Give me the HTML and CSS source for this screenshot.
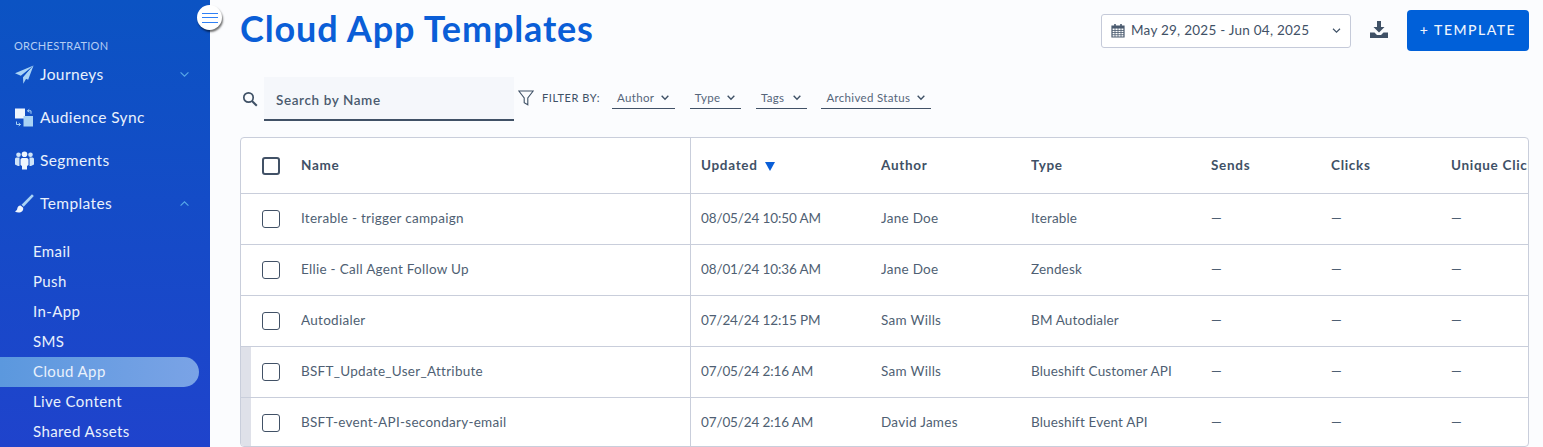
FILE: index.html
```html
<!DOCTYPE html>
<html lang="en">
<head>
<meta charset="utf-8">
<title>Cloud App Templates</title>
<link rel="stylesheet" href="styles.css">
</head>
<body>
<div class="app">
  <aside class="sidebar">
    <button class="menu-toggle" aria-label="Toggle menu"><span></span><span></span><span></span></button>
    <div class="nav-label">ORCHESTRATION</div>
    <a class="nav-item">
      <svg class="nav-icon" viewBox="0 0 19 19"><path d="M18.500.5 0 8.200l5.800 2.600L18.500.5 8 12.500l.3 6.200z" fill="#a9d3f5"/><path d="M18.500.5 8 12.500l5.200 2.300z" fill="#a9d3f5"/></svg>
      <span class="nav-text">Journeys</span>
      <svg class="nav-chevron" viewBox="0 0 12 8"><path d="M1.500 1.500 6 6l4.500-4.500" /></svg>
    </a>
    <a class="nav-item">
      <svg class="nav-icon" viewBox="0 0 19 19"><rect x="0" y="0.500" width="10" height="10" fill="#eef5fd"/><rect x="8.500" y="8" width="9.500" height="10.500" fill="#a9d3f5"/><path d="M12.500 2.800h3.500v3M12.500 2.800l1.800-1.500M12.500 2.800l1.800 1.500M5.500 16.500H1.500v-3M5.500 16.500l-1.800-1.500M5.500 16.500l-1.800 1.500" fill="none" stroke="#a9d3f5" stroke-width="1"/></svg>
      <span class="nav-text">Audience Sync</span>
    </a>
    <a class="nav-item">
      <svg class="nav-icon" viewBox="0 0 19 19"><g fill="#cfe4f8"><circle cx="3.500" cy="3.800" r="2.300"/><circle cx="15.500" cy="3.800" r="2.300"/><path d="M0 8a1.500 1.500 0 0 1 1.500-1.500H4.500V15H3L0 13.500zM19 8a1.500 1.500 0 0 0-1.500-1.500H14.500V15H16l3-1.500z"/></g><circle cx="9.500" cy="3.200" r="2.800" fill="#f0f6fd"/><path d="M5.500 8.500A1.800 1.800 0 0 1 7.300 7h4.400a1.800 1.800 0 0 1 1.800 1.500V14L12 15v3.500H7V15l-1.500-1z" fill="#f0f6fd"/></svg>
      <span class="nav-text">Segments</span>
    </a>
    <a class="nav-item">
      <svg class="nav-icon" viewBox="0 0 19 19"><path d="M17 .3 6.500 10.800l2.200 2L18.800 2z" fill="#a9d3f5"/><path d="M5.600 11.500c-2.300.2-3 1.600-3.300 3-.2 1.300-.9 2.200-2.300 2.900 2 1.400 5.500 1.500 7.200-.2 1.200-1.200 1.200-2.800.8-3.700z" fill="#f0f6fd"/></svg>
      <span class="nav-text">Templates</span>
      <svg class="nav-chevron" viewBox="0 0 12 8"><path d="M1.500 6.500 6 2l4.500 4.500" /></svg>
    </a>
    <ul class="subnav">
      <li>Email</li>
      <li>Push</li>
      <li>In-App</li>
      <li>SMS</li>
      <li class="active">Cloud App</li>
      <li>Live Content</li>
      <li>Shared Assets</li>
    </ul>
  </aside>
  <main class="main">
    <header class="page-head">
      <h1>Cloud App Templates</h1>
      <div class="head-actions">
        <div class="date-picker">
          <svg class="cal" viewBox="0 0 14 15"><path d="M1 3h12v11H1z" fill="none" stroke="#4a5a6e" stroke-width="1.200"/><path d="M1 3h12v2.500H1zM3.200 1h1.600v3H3.200zM9.200 1h1.600v3H9.200z" fill="#4a5a6e"/><path d="M1 7.500h12M1 9.500h12M1 11.700h12M4 5v9M7 5v9M10 5v9" stroke="#4a5a6e" stroke-width=".8"/></svg>
          <span class="date-text">May 29, 2025 - Jun 04, 2025</span>
          <svg class="chev dark" viewBox="0 0 12 8"><path d="M2 2l4 4 4-4"/></svg>
        </div>
        <button class="icon-btn" aria-label="Download">
          <svg viewBox="0 0 18 17" width="18" height="17"><path d="M7 0h4v6h3.500L9 11.500 3.500 6H7z" fill="#3f5166"/><path d="M0 11.500h4.500L7 14h4l2.500-2.500H18V17H0z" fill="#3f5166"/></svg>
        </button>
        <button class="primary-btn">+ TEMPLATE</button>
      </div>
    </header>
    <section class="filters">
      <svg class="search-icon" viewBox="0 0 16 16"><circle cx="6.500" cy="6.500" r="4.700" fill="none" stroke="#3f5166" stroke-width="1.700"/><path d="M10 10l4.800 4.800" stroke="#3f5166" stroke-width="2"/></svg>
      <div class="search-box">Search by Name</div>
      <svg class="funnel" viewBox="0 0 16 16"><path d="M.8 1h14.400L9.800 8v6.800l-3.600-2V8z" fill="none" stroke="#3f5166" stroke-width="1.100"/></svg>
      <span class="filter-label">FILTER BY:</span>
      <div class="dropdown">Author<svg class="chev" viewBox="0 0 12 8"><path d="M2 2l4 4 4-4"/></svg></div>
      <div class="dropdown">Type<svg class="chev" viewBox="0 0 12 8"><path d="M2 2l4 4 4-4"/></svg></div>
      <div class="dropdown">Tags<svg class="chev" viewBox="0 0 12 8"><path d="M2 2l4 4 4-4"/></svg></div>
      <div class="dropdown">Archived Status<svg class="chev" viewBox="0 0 12 8"><path d="M2 2l4 4 4-4"/></svg></div>
    </section>
    <div class="table-wrap">
      <table>
        <colgroup>
          <col class="c-check"><col class="c-name"><col class="c-updated"><col class="c-author"><col class="c-type"><col class="c-num"><col class="c-num"><col class="c-num">
        </colgroup>
        <thead>
          <tr>
            <th class="cell-check"><span class="box head-box"></span></th>
            <th class="cell-name">Name</th>
            <th class="cell-pad">Updated <span class="sort"></span></th>
            <th>Author</th>
            <th>Type</th>
            <th>Sends</th>
            <th>Clicks</th>
            <th>Unique Clicks</th>
          </tr>
        </thead>
        <tbody>
          <tr>
            <td class="cell-check"><span class="box"></span></td>
            <td class="cell-name">Iterable - trigger campaign</td>
            <td class="cell-pad cell-date">08/05/24 10:50 AM</td>
            <td>Jane Doe</td><td class="cell-type">Iterable</td><td>—</td><td>—</td><td>—</td>
          </tr>
          <tr>
            <td class="cell-check"><span class="box"></span></td>
            <td class="cell-name">Ellie - Call Agent Follow Up</td>
            <td class="cell-pad cell-date">08/01/24 10:36 AM</td>
            <td>Jane Doe</td><td class="cell-type">Zendesk</td><td>—</td><td>—</td><td>—</td>
          </tr>
          <tr>
            <td class="cell-check"><span class="box"></span></td>
            <td class="cell-name">Autodialer</td>
            <td class="cell-pad cell-date">07/24/24 12:15 PM</td>
            <td>Sam Wills</td><td class="cell-type">BM Autodialer</td><td>—</td><td>—</td><td>—</td>
          </tr>
          <tr>
            <td class="cell-check marked"><span class="box"></span></td>
            <td class="cell-name">BSFT_Update_User_Attribute</td>
            <td class="cell-pad cell-date">07/05/24 2:16 AM</td>
            <td>Sam Wills</td><td class="cell-type">Blueshift Customer API</td><td>—</td><td>—</td><td>—</td>
          </tr>
          <tr>
            <td class="cell-check marked"><span class="box"></span></td>
            <td class="cell-name">BSFT-event-API-secondary-email</td>
            <td class="cell-pad cell-date">07/05/24 2:16 AM</td>
            <td>David James</td><td class="cell-type">Blueshift Event API</td><td>—</td><td>—</td><td>—</td>
          </tr>
        </tbody>
      </table>
    </div>
  </main>
</div>
</body>
</html>
```
FILE: styles.css
```css
* { box-sizing: border-box; }
html, body { margin: 0; height: 100%; overflow: hidden; }
body { font-family: "Lato", "Open Sans", sans-serif; color: #3f5166; background: #fbfcfe; }
.app { display: flex; height: 447px; overflow: hidden; }

.sidebar {
  position: relative;
  flex: 0 0 210px;
  padding-top: 39px;
  background: linear-gradient(180deg, #0b53c3 0%, #1f43cc 100%);
  color: #e9f1fc;
}
.menu-toggle {
  position: absolute;
  top: 5px;
  left: 197px;
  width: 25px;
  height: 25px;
  padding: 0;
  border: 0;
  border-radius: 50%;
  background: #fff;
  box-shadow: 1px 2px 2px rgba(0, 0, 0, .55);
  display: flex;
  flex-direction: column;
  align-items: center;
  justify-content: center;
  gap: 3.500px;
}
.menu-toggle span { display: block; width: 16px; height: 1px; background: #2f80f5; }
.nav-label { font-size: 11px; line-height: 14px; padding-left: 14px; letter-spacing: .3px; color: #b4cdf3; }
.nav-item {
  display: flex;
  align-items: center;
  height: 43px;
  padding-left: 15px;
  font-size: 15.500px;
}
.nav-icon { width: 19px; height: 19px; flex: none; margin-right: 6px; }
.nav-text { flex: 1; letter-spacing: .4px; margin-top: -1px; }
.nav-chevron { width: 11px; height: 7px; flex: none; margin-right: 20px; fill: none; stroke: #57a8e8; stroke-width: 1.300; }
.subnav { list-style: none; margin: 12px 0 0; padding: 0; font-size: 15px; letter-spacing: .4px; }
.subnav li { height: 30px; line-height: 29px; padding-left: 33px; width: 199px; }
.subnav li.active {
  border-radius: 0 15px 15px 0;
  background: linear-gradient(90deg, #5b98de 0%, #7aa3e6 100%);
}

.main { flex: 1; min-width: 0; padding: 0 14px 0 30px; display: flex; flex-direction: column; }
.page-head { display: flex; justify-content: space-between; align-items: flex-start; height: 77px; padding-top: 10px; }
h1 { margin: -1px 0 0; font-size: 36px; line-height: 38px; font-weight: 700; color: #0a5ed7; letter-spacing: .85px; }
.head-actions { display: flex; align-items: center; height: 41px; }
.date-picker {
  display: flex;
  align-items: center;
  width: 250px;
  height: 34px;
  padding: 0 8px 2px 9px;
  background: #fff;
  border: 1px solid #c5cad9;
  border-radius: 3px;
  font-size: 13.500px;
  letter-spacing: .25px;
}
.cal { width: 14px; height: 15px; margin: 2px 6px 0 0; flex: none; }
.date-text { flex: 1; }
.chev { width: 11px; height: 7px; fill: none; stroke: #3f5166; stroke-width: 1.700; flex: none; }
.chev.dark { stroke-width: 1.300; margin-top: 2px; }
.icon-btn { margin: 0 19px 2px; width: 18px; height: 17px; padding: 0; border: 0; background: none; display: block; }
.primary-btn {
  width: 122px;
  height: 41px;
  padding-bottom: 3px;
  border: 0;
  border-radius: 4px;
  background: #0060d9;
  color: #eef4fd;
  font: 500 14px "Lato", sans-serif;
  letter-spacing: 1.500px;
}

.filters { display: flex; align-items: center; height: 44px; margin-bottom: 16px; }
.search-icon { width: 16px; height: 16px; margin: 0 6px 0 2px; flex: none; }
.search-box {
  width: 250px;
  height: 44px;
  padding: 3px 12px 0;
  line-height: 40px;
  background: #f5f7fb;
  border-bottom: 2px solid #415166;
  font-size: 13.500px;
  font-weight: 600;
  letter-spacing: .6px;
  color: #4a5a6e;
}
.funnel { width: 16px; height: 16px; margin: 0 8px 3px 4px; flex: none; }
.filter-label { font-size: 11px; margin: 0 12px 3px 0; letter-spacing: .55px; }
.dropdown {
  display: flex;
  align-items: center;
  justify-content: space-between;
  gap: 6px;
  min-width: 51px;
  height: 21px;
  margin: 0 14.500px 2px 0;
  padding: 0 5px;
  border-bottom: 1px solid #415166;
  font-size: 11.500px;
  letter-spacing: .33px;
  color: #55657a;
}
.dropdown .chev { width: 10px; height: 7px; }

.table-wrap {
  flex: 1;
  min-height: 0;
  overflow: hidden;
  background: #fff;
  border: 1px solid #c9cedb;
  border-radius: 4px;
}
table { width: 1288px; table-layout: fixed; border-collapse: separate; border-spacing: 0; font-size: 13.500px; }
.c-check { width: 60px; }
.c-name { width: 390px; }
.c-updated { width: 190px; }
.c-author { width: 150px; }
.c-type { width: 180px; }
.c-num { width: 120px; }
th, td { padding: 0 0 2px; text-align: left; border-bottom: 1px solid #c9cedb; white-space: nowrap; overflow: hidden; letter-spacing: .28px; }
th { height: 56px; font-weight: 700; letter-spacing: .7px; }
td { height: 51px; color: #4f5f73; }
.cell-check { padding: 0 0 0 21px; }
.cell-name { border-right: 1px solid #c9cedb; }
.cell-pad { padding-left: 10px; }
td.cell-date { letter-spacing: -.12px; }
td.cell-type { letter-spacing: .15px; }
.marked { box-shadow: inset 10px 0 0 #dfe1e9; }
.box { display: block; width: 18px; height: 18px; border: 1px solid #415166; border-radius: 3px; background: #fff; }
.head-box { border-width: 2px; }
.sort { display: inline-block; margin-left: 3px; width: 0; height: 0; border-left: 5px solid transparent; border-right: 5px solid transparent; border-top: 9px solid #0a5ed7; vertical-align: -1px; }
```
